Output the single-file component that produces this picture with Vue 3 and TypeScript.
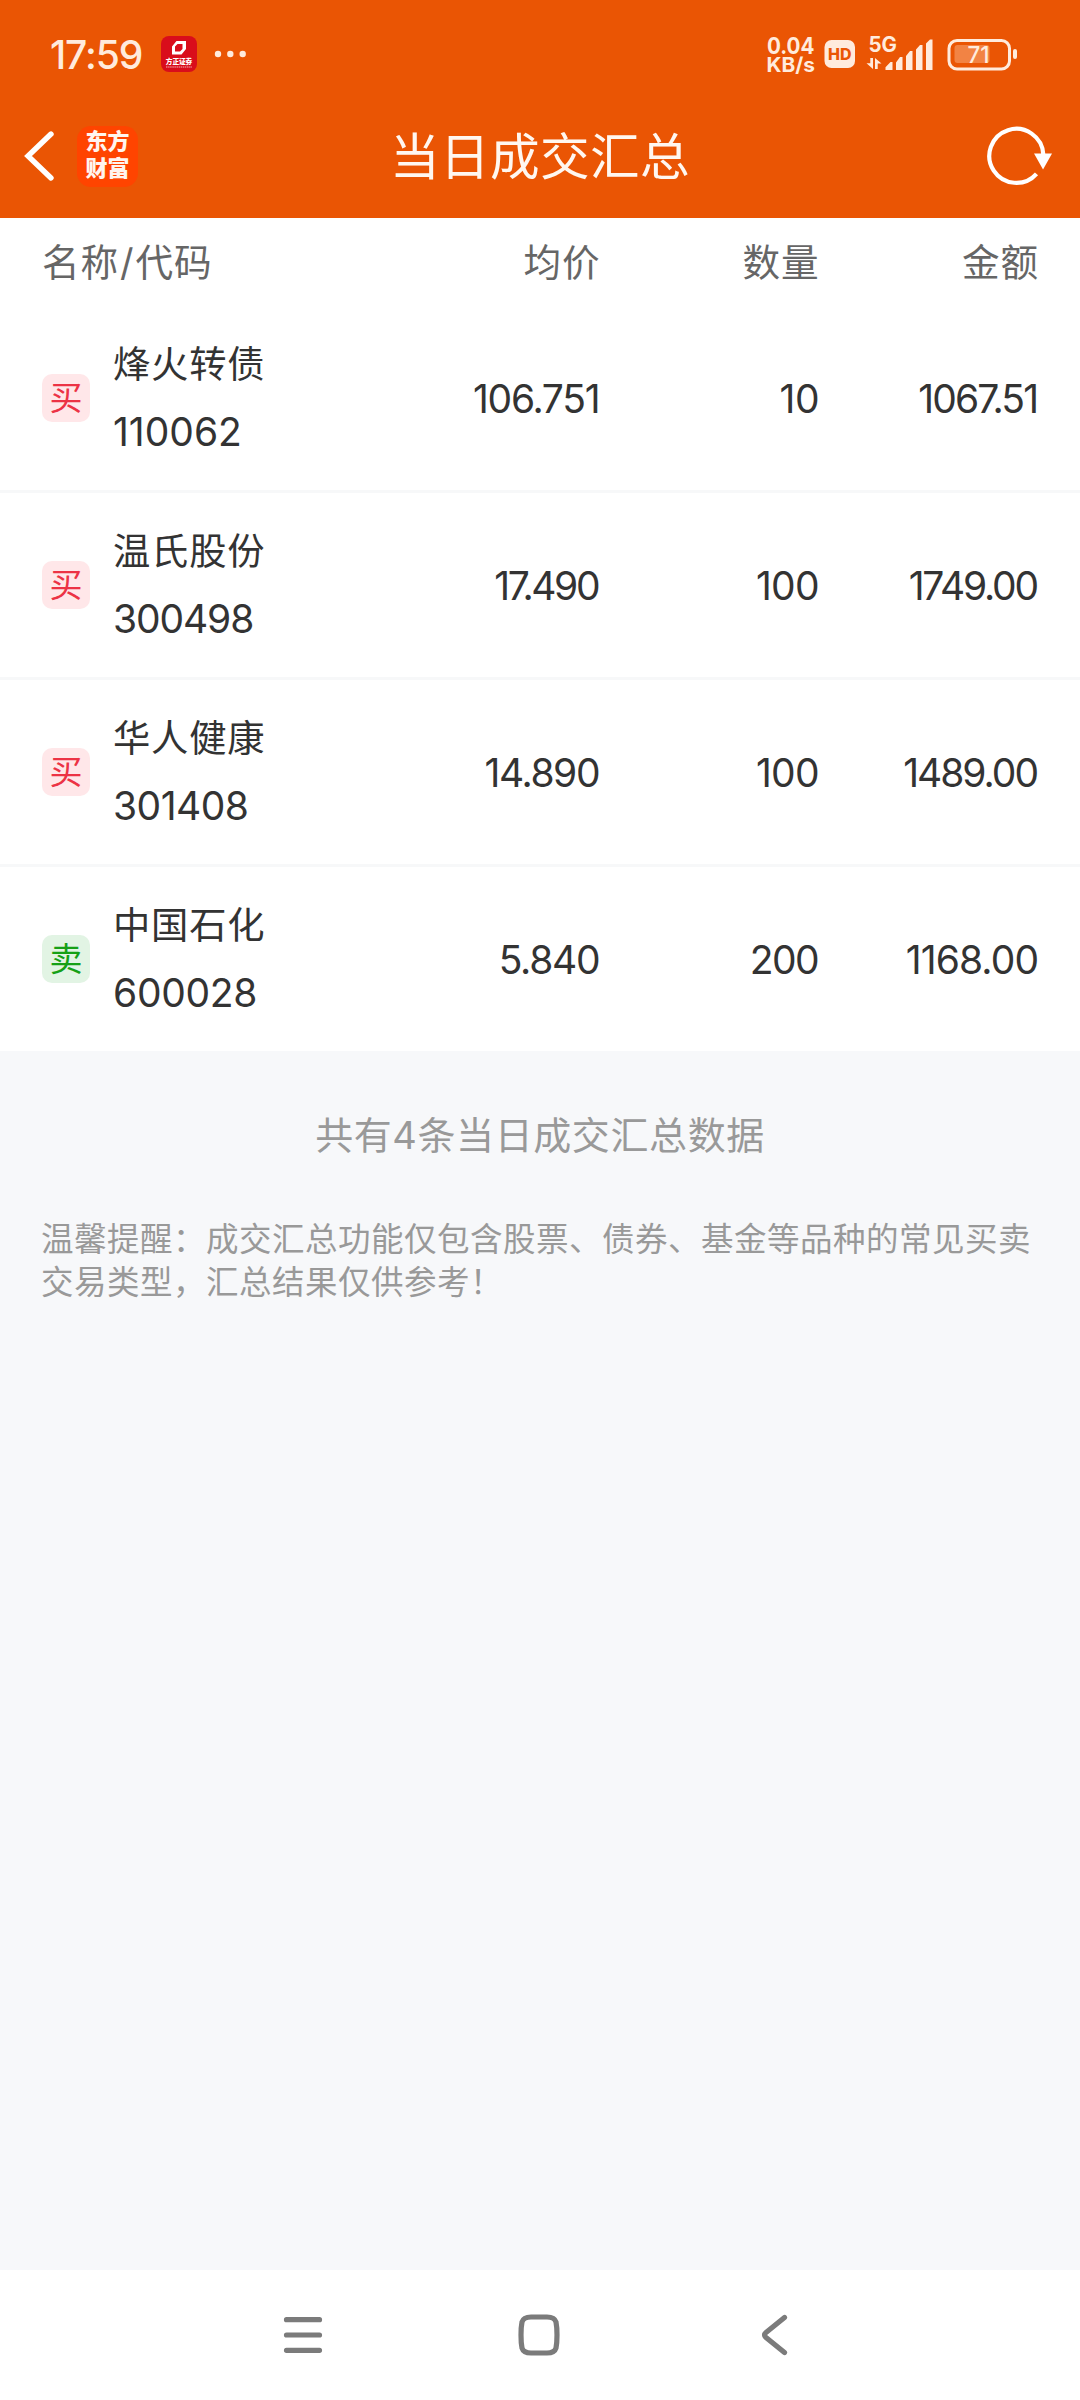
<script setup lang="ts">
interface Figure {
  text: string
  tracking: number
}

interface Deal {
  side: 'buy' | 'sell'
  name: string
  code: Figure
  cells: Figure[]
}

const fig = (text: string, tracking: number): Figure => ({ text, tracking })

const deals: Deal[] = [
  { side: 'buy', name: '烽火转债', code: fig('110062', 0), cells: [fig('106.751', -1.3), fig('10', -0.4), fig('1067.51', -1.9)] },
  { side: 'buy', name: '温氏股份', code: fig('300498', -1.1), cells: [fig('17.490', -2.4), fig('100', -0.8), fig('1749.00', -2.2)] },
  { side: 'buy', name: '华人健康', code: fig('301408', -0.5), cells: [fig('14.890', -1.4), fig('100', -0.8), fig('1489.00', -2)] },
  { side: 'sell', name: '中国石化', code: fig('600028', -0.3), cells: [fig('5.840', -1.3), fig('200', -1.6), fig('1168.00', -0.9)] },
]

const trackingStyle = (f: Figure) => ({ letterSpacing: `${f.tracking}px`, marginRight: `${-f.tracking}px` })
</script>

<template>
  <div class="screen">
    <header class="top">
      <div class="status">
        <span class="time">17:59</span>
        <svg class="notice" width="36" height="36" viewBox="0 0 36 36">
          <rect width="36" height="36" rx="8" fill="#d90d1b" />
          <path fill="#fff" fill-rule="evenodd" d="M15.500 5H25V13L20.500 18.500H11V10.500ZM16.500 8L14 10.500V15.500H19L21.500 13V8Z" />
          <text x="4.800" y="28.300" font-size="6.700" font-weight="900" fill="#fff" textLength="26.500">方正证券</text>
          <path d="M5 31H31" stroke="#fff" stroke-width=".9" stroke-dasharray="1.500 .6" opacity=".75" />
        </svg>
        <svg class="more" width="34" height="8" viewBox="0 0 34 8" fill="#ffebdd">
          <circle cx="5" cy="4" r="3.200" /><circle cx="17.300" cy="4" r="3.200" /><circle cx="29.700" cy="4" r="3.200" />
        </svg>
        <svg class="signals" width="252" height="44" viewBox="0 0 252 44" fill="#ffebdd">
          <g font-weight="700">
            <text x="1" y="22" font-size="23" textLength="47.500" lengthAdjust="spacingAndGlyphs">0.04</text>
            <text x="0.500" y="40" font-size="20" textLength="48.500" lengthAdjust="spacingAndGlyphs">KB/s</text>
            <text x="102.500" y="20" font-size="21" textLength="28.500" lengthAdjust="spacingAndGlyphs">5G</text>
          </g>
          <rect x="58.500" y="8" width="30.500" height="28" rx="7" />
          <text x="62" y="27.800" font-size="16" font-weight="800" fill="#ea5504" textLength="23.500" lengthAdjust="spacingAndGlyphs">HD</text>
          <path d="M104.300 26H107V37L100.500 31.300H104.300ZM109 26L115.500 31.600H111.700V37H109Z" />
          <path d="M119.500 38V35.200L124.500 30H126.500V38ZM130 38V30.500L134 25H136.500V38ZM140 38V24L144 19H146.500V38ZM150 38V17.500L154 13H156.500V38ZM160 38V11.500L164 7.500H166.500V38Z" />
          <rect x="183" y="8.500" width="60.500" height="28.500" rx="8" fill="none" stroke="#ffebdd" stroke-width="3" />
          <rect x="188.500" y="13" width="35" height="18" rx="3" fill="#f28344" />
          <text x="201.500" y="31.200" font-size="23.500" font-weight="500" textLength="22" lengthAdjust="spacingAndGlyphs">71</text>
          <rect x="247" y="17" width="4" height="10" rx="2" />
        </svg>
      </div>
      <div class="title-bar">
        <svg width="33" height="56" viewBox="0 0 33 56" fill="none" stroke="#fff" stroke-width="5.400" stroke-linecap="round" stroke-linejoin="miter">
          <path d="M27 6L4 28L27 50" />
        </svg>
        <div class="brand"><span>东方</span><span>财富</span></div>
        <h1>当日成交汇总</h1>
        <svg class="refresh" width="68" height="60" viewBox="0 0 68 60">
          <path d="M51.500 47.800A27 27 0 1 1 58.300 28.500" fill="none" stroke="#fff" stroke-width="4.200" />
          <path d="M49 27.500H67L58 43.500Z" fill="#fff" />
        </svg>
      </div>
    </header>

    <section class="table">
      <div class="row head">
        <span>名称<span class="slash">/</span>代码</span>
        <span>均价</span><span>数量</span><span>金额</span>
      </div>
      <div v-for="deal in deals" :key="deal.code.text" class="row deal">
        <div class="security">
          <span class="badge" :class="deal.side">{{ deal.side === 'buy' ? '买' : '卖' }}</span>
          <div class="identity">
            <span class="name">{{ deal.name }}</span>
            <span class="num" :style="trackingStyle(deal.code)">{{ deal.code.text }}</span>
          </div>
        </div>
        <span v-for="(cell, i) in deal.cells" :key="i" class="num" :style="trackingStyle(cell)">{{ cell.text }}</span>
      </div>
    </section>

    <main class="notes">
      <p class="total">共有4条当日成交汇总数据</p>
      <p class="tip">温馨提醒：成交汇总功能仅包含股票、债券、基金等品种的常见买卖交易类型，汇总结果仅供参考！</p>
    </main>

    <nav class="system-nav">
      <svg width="46" height="46" viewBox="0 0 46 46"><path d="M6.500 7.700H39.500M6.500 23H39.500M6.500 38.300H39.500" /></svg>
      <svg width="46" height="46" viewBox="0 0 46 46"><path d="M15 5H31Q38.500 5 40 10Q41 15 41 23T40 36Q38.500 41 31 41H15Q7.500 41 6 36Q5 31 5 23T6 10Q7.500 5 15 5Z" /></svg>
      <svg width="46" height="46" viewBox="0 0 46 46"><path d="M32.500 5.500L14 20.500Q11 23 14 25.500L32.500 40.500" /></svg>
    </nav>
  </div>
</template>

<style>
body {
  margin: 0;
}
</style>

<style scoped>
.screen {
  display: flex;
  flex-direction: column;
  width: 1080px;
  height: 2400px;
  background: #f7f8fa;
  color: #333;
  font-family: Inter, "Noto Sans CJK SC", sans-serif;
  overflow: hidden;
}

.top {
  height: 218px;
  background: #ea5504;
}

.status {
  display: flex;
  align-items: center;
  height: 108px;
  padding: 0 62px 0 50px;
}

.time {
  width: 111px;
  color: #ffebdd;
  font-size: 39px;
  font-weight: 500;
  letter-spacing: -1.100px;
  white-space: nowrap;
}

.more {
  margin-left: 16px;
}

.signals {
  margin-left: auto;
}

.title-bar {
  display: grid;
  grid-template-columns: 53px 61px 1fr 111px;
  align-items: center;
  height: 96px;
  padding: 0 27px 0 24px;
}

.brand {
  display: flex;
  flex-direction: column;
  align-items: center;
  justify-content: center;
  box-sizing: border-box;
  width: 61px;
  height: 61px;
  padding-bottom: 3px;
  border-radius: 14px;
  background: #ff4400;
  color: #fff5ef;
  font-size: 22px;
  font-weight: 900;
  line-height: 27px;
}

h1 {
  margin: 0;
  padding-bottom: 7px;
  color: #fff7f0;
  font-size: 49.600px;
  font-weight: 400;
  letter-spacing: 0.400px;
  text-align: center;
  white-space: nowrap;
}

.refresh {
  justify-self: end;
}

.table {
  background: #fff;
}

.row {
  display: grid;
  grid-template-columns: 358.500px 200px 219px 219.500px;
  align-items: center;
  padding: 0 41px 0 42px;
  text-align: right;
}

.row.head {
  box-sizing: border-box;
  height: 88px;
  padding-bottom: 5px;
  color: #666;
  font-size: 37.600px;
  letter-spacing: 0.900px;
}

.head > :first-child {
  text-align: left;
}

.slash {
  padding: 0 1px;
}

.row.deal {
  height: 184px;
  border-bottom: 3px solid #f7f8f9;
}

.row.deal:last-child {
  border-bottom: 0;
}

.security {
  display: flex;
  align-items: center;
  gap: 23px;
  text-align: left;
}

.badge {
  display: flex;
  align-items: center;
  justify-content: center;
  width: 48px;
  height: 48px;
  border-radius: 10px;
  font-size: 33px;
  line-height: 48px;
}

.buy {
  background: #ffe7e9;
  color: #ec3345;
}

.sell {
  background: #e2f4e4;
  color: #16a016;
}

.identity {
  display: flex;
  flex-direction: column;
  padding-top: 2px;
}

.name {
  font-size: 37.300px;
  letter-spacing: 0.800px;
  line-height: 66px;
}

.num {
  font-size: 39px;
}

.identity .num {
  line-height: 68px;
}

.notes {
  flex: 1;
  padding: 54px 42px 0;
  color: #999;
}

.total {
  margin: 0;
  font-size: 38px;
  letter-spacing: 0.600px;
  line-height: 60px;
  text-align: center;
}

.tip {
  width: 1000px;
  margin: 53px 0 0 -1px;
  font-size: 32.500px;
  letter-spacing: 0.500px;
  line-height: 43px;
}

.system-nav {
  display: flex;
  align-items: center;
  justify-content: center;
  gap: 190px;
  height: 130px;
  padding-right: 2px;
  background: #fff;
}

.system-nav svg {
  fill: none;
  stroke: #7b7b7b;
  stroke-width: 5.200;
  stroke-linecap: round;
}
</style>
